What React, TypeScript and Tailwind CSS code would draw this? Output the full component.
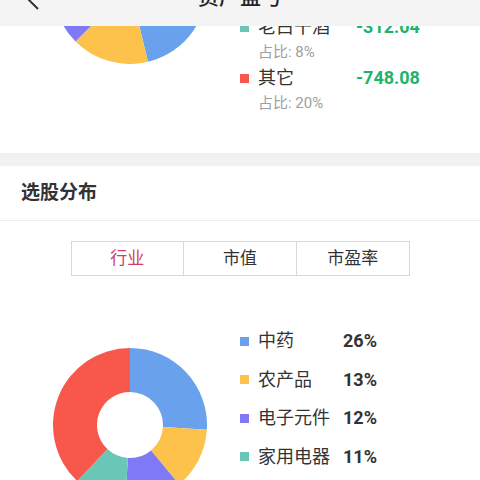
import React from 'react';

type Slice = { color: string; value: number };

const BLUE = '#6aa1ec';
const YELLOW = '#fcc24c';
const PURPLE = '#8079f6';
const TEAL = '#6ac6b7';
const RED = '#f8584b';

function arcPath(cx: number, cy: number, r: number, ir: number, a0: number, a1: number) {
  const rad = (a: number) => ((a - 90) * Math.PI) / 180;
  const p = (rr: number, a: number) => [cx + rr * Math.cos(rad(a)), cy + rr * Math.sin(rad(a))];
  const large = a1 - a0 > 180 ? 1 : 0;
  const [x0, y0] = p(r, a0);
  const [x1, y1] = p(r, a1);
  const [x2, y2] = p(ir, a1);
  const [x3, y3] = p(ir, a0);
  return `M${x0} ${y0} A${r} ${r} 0 ${large} 1 ${x1} ${y1} L${x2} ${y2} A${ir} ${ir} 0 ${large} 0 ${x3} ${y3} Z`;
}

function Donut({ slices }: { slices: Slice[] }) {
  const total = slices.reduce((s, x) => s + x.value, 0);
  let acc = 0;
  return (
    <svg width="154" height="154" viewBox="0 0 154 154" className="shrink-0">
      {slices.map((s, i) => {
        const a0 = (acc / total) * 360;
        acc += s.value;
        const a1 = (acc / total) * 360;
        return <path key={i} d={arcPath(77, 77, 77, 33, a0, a1)} fill={s.color} />;
      })}
    </svg>
  );
}

const topSlices: Slice[] = [
  { color: BLUE, value: 46.25 },
  { color: YELLOW, value: 16.25 },
  { color: PURPLE, value: 9.5 },
  { color: TEAL, value: 8 },
  { color: RED, value: 20 },
];

const industrySlices: Slice[] = [
  { color: BLUE, value: 26 },
  { color: YELLOW, value: 13 },
  { color: PURPLE, value: 12 },
  { color: TEAL, value: 11 },
  { color: RED, value: 38 },
];

const profitRows = [
  { color: TEAL, name: '老白干酒', value: '-312.04', share: '8%' },
  { color: RED, name: '其它', value: '-748.08', share: '20%' },
];

const industryRows = [
  { color: BLUE, name: '中药', pct: '26%' },
  { color: YELLOW, name: '农产品', pct: '13%' },
  { color: PURPLE, name: '电子元件', pct: '12%' },
  { color: TEAL, name: '家用电器', pct: '11%' },
];

const tabs = ['行业', '市值', '市盈率'];

export default function App() {
  return (
    <div
      className="relative w-[480px] h-[480px] overflow-hidden bg-white text-[#333]"
      style={{ fontFamily: "Roboto, 'Noto Sans CJK SC', sans-serif" }}
    >
      {/* profit breakdown, scrolled partly under the title bar */}
      <div className="flex h-[243px] mt-[-90px]">
        <div className="ml-[53px]">
          <Donut slices={topSlices} />
        </div>
        <div className="ml-[33px] pt-[104.5px] flex flex-col">
          {profitRows.map((r) => (
            <div key={r.name} className="flex flex-col">
              <div className="flex items-center h-[25px]">
                <span className="w-[9px] h-[9px] mr-[9px]" style={{ backgroundColor: r.color }} />
                <span className="w-[98px] text-[18px] leading-none">{r.name}</span>
                <span className="text-[18px] font-bold leading-none text-[#1db36a]">{r.value}</span>
              </div>
              <div className="h-[26px] flex items-center pl-[18px] text-[15px] text-[#a0a0a0]">
                占比: {r.share}
              </div>
            </div>
          ))}
        </div>
      </div>

      <div className="h-[13px] bg-[#f1f1f1]" />

      <div className="h-[55px] flex items-center px-[21px] border-b border-[#ececec]">
        <span className="text-[19px] font-bold text-[#333]">选股分布</span>
      </div>

      <div className="flex justify-center pt-[20px]">
        <div className="flex w-[339px] h-[35px] border border-[#d8d8d8]">
          {tabs.map((t, i) => (
            <div
              key={t}
              className={`flex-1 flex items-center justify-center text-[17px] ${
                i > 0 ? 'border-l border-[#d8d8d8]' : ''
              } ${i === 0 ? 'text-[#cf3f62]' : 'text-[#333]'}`}
            >
              {t}
            </div>
          ))}
        </div>
      </div>

      <div className="flex mt-[46px]">
        <div className="ml-[53px] mt-[26px]">
          <Donut slices={industrySlices} />
        </div>
        <div className="ml-[33px] flex flex-col">
          {industryRows.map((r) => (
            <div key={r.name} className="flex items-center h-[38.5px]">
              <span className="w-[9px] h-[9px] mr-[9px]" style={{ backgroundColor: r.color }} />
              <span className="w-[85px] text-[18px] leading-none">{r.name}</span>
              <span className="text-[18px] font-bold leading-none">{r.pct}</span>
            </div>
          ))}
        </div>
      </div>

      {/* title bar lies over the scrolled content */}
      <div className="absolute inset-x-0 top-[-30px] h-[56px] bg-[#f4f4f4] flex items-center justify-center">
        <svg className="absolute left-[20px] top-[12px]" width="30" height="30" viewBox="0 0 30 30">
          <path d="M18 4 L7 16 L18 27" fill="none" stroke="#333" strokeWidth="2" />
        </svg>
        <span className="text-[21px] font-medium text-[#222]">资产盈亏</span>
      </div>
    </div>
  );
}
